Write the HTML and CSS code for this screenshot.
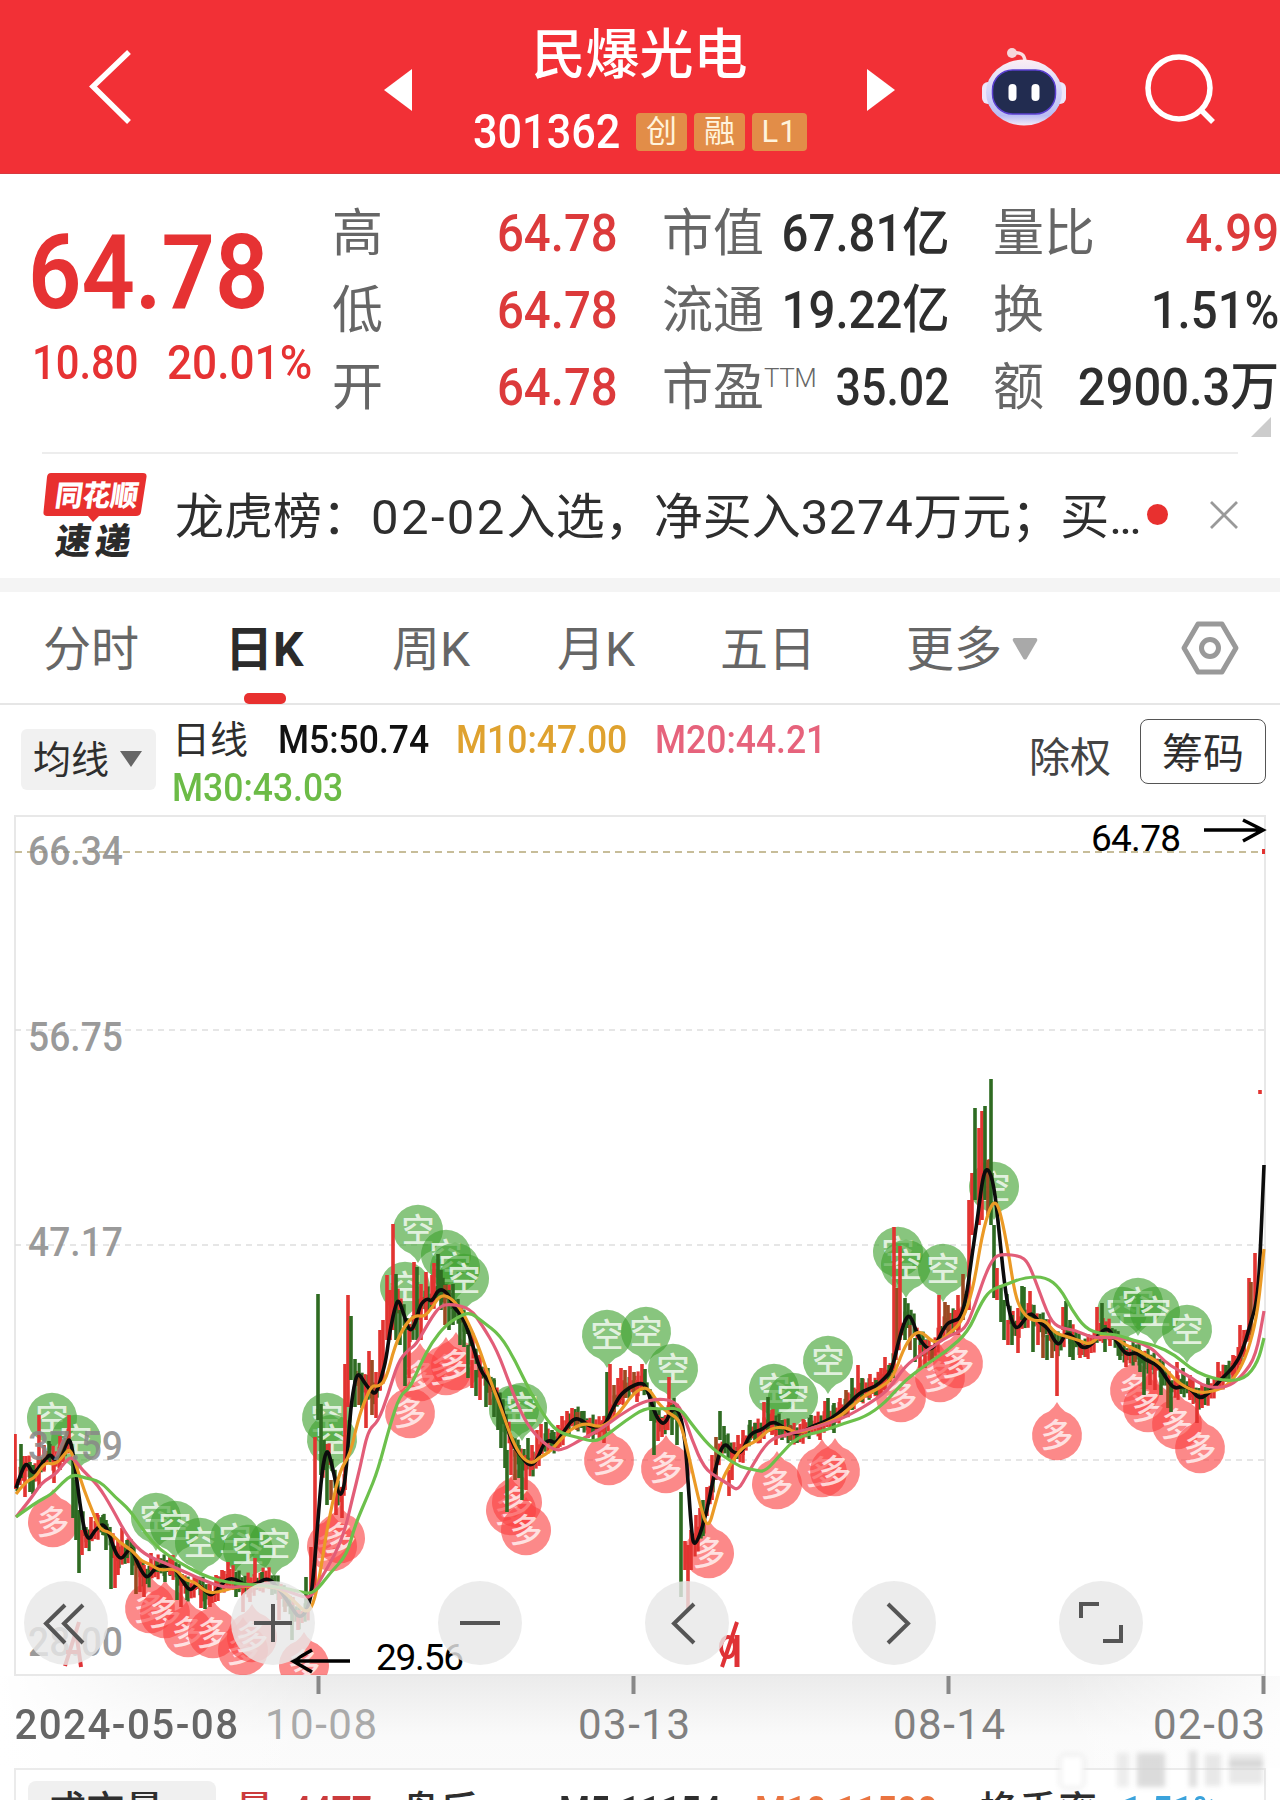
FILE: index.html
```html
<!DOCTYPE html>
<html lang="zh-CN">
<head>
    <meta charset="UTF-8">
    <meta name="viewport" content="width=device-width, initial-scale=1.0">
    <title>民爆光电 301362</title>
    <link rel="stylesheet" href="styles.css">
</head>
<body>
<header class="topbar">
    <svg class="back" viewBox="0 0 48 80"><path d="M43 5 L7 39.500 L43 75"/></svg>
    <svg class="tri" viewBox="0 0 28 42"><path d="M28 0 V42 L0 21 Z"/></svg>
    <div class="stock">
        <div class="stock-name">民爆光电</div>
        <div class="stock-code">
            <span class="code">301362</span>
            <span class="badge">创</span>
            <span class="badge">融</span>
            <span class="badge badge-l1">L1</span>
        </div>
    </div>
    <svg class="tri" viewBox="0 0 28 42"><path d="M0 0 V42 L28 21 Z"/></svg>
    <svg class="robot" viewBox="0 0 84 78">
        <defs>
            <linearGradient id="shell" x1="0" y1="0" x2="0" y2="1">
                <stop offset="0" stop-color="#fbeef4"/>
                <stop offset="0.5" stop-color="#d3d4f8"/>
                <stop offset="0.85" stop-color="#b9bcf3"/>
                <stop offset="1" stop-color="#f5e9f6"/>
            </linearGradient>
        </defs>
        <path d="M43 14 C43 6 38 4 31 5" fill="none" stroke="#fbdde0" stroke-width="3.500"/>
        <circle cx="30" cy="5" r="5" fill="#f6d6da"/>
        <rect x="0" y="34" width="14" height="22" rx="6" fill="#eee6fa"/>
        <rect x="70" y="34" width="14" height="22" rx="6" fill="#eee6fa"/>
        <ellipse cx="42" cy="44.500" rx="38" ry="33" fill="url(#shell)"/>
        <rect x="10.500" y="22" width="63" height="44" rx="20" fill="#222c50" stroke="#5a3fd0" stroke-width="1.500"/>
        <rect x="26.500" y="36" width="8" height="17" rx="4" fill="#fff"/>
        <rect x="49.500" y="36" width="8" height="17" rx="4" fill="#fff"/>
    </svg>
    <svg class="search" viewBox="0 0 72 72"><circle cx="34" cy="34" r="31"/><path d="M56 56 L68 68"/></svg>
</header>

<section class="quote">
    <div class="price">
        <div class="price-now"><span class="num">64.78</span></div>
        <div class="price-diff"><span class="num">10.80</span><span class="num">20.01%</span></div>
    </div>
    <dl class="stats stats-a">
        <div><dt>高</dt><dd class="up">64.78</dd></div>
        <div><dt>低</dt><dd class="up">64.78</dd></div>
        <div><dt>开</dt><dd class="up">64.78</dd></div>
    </dl>
    <dl class="stats stats-b">
        <div><dt>市值</dt><dd>67.81亿</dd></div>
        <div><dt>流通</dt><dd>19.22亿</dd></div>
        <div><dt>市盈<sup>TTM</sup></dt><dd class="pe">35.02</dd></div>
    </dl>
    <dl class="stats stats-c">
        <div><dt>量比</dt><dd class="up">4.99</dd></div>
        <div><dt>换</dt><dd>1.51%</dd></div>
        <div><dt>额</dt><dd class="amount">2900.3万</dd></div>
    </dl>
    <i class="corner"></i>
</section>

<section class="news">
    <svg class="news-logo" viewBox="0 0 108 92">
        <path d="M9 3 H101 Q105 3 104.500 7 L99 42 Q98.500 46 94 46 H57 L51 52 L46 46 H5 Q1 46 1.500 42 L5 7 Q5.500 3 9 3 Z" fill="#e8302f"/>
        <g transform="skewX(-8)">
            <text x="17" y="36" textLength="83" lengthAdjust="spacingAndGlyphs" font-size="29" fill="#fff">同花顺</text>
            <text x="24" y="84" textLength="35" lengthAdjust="spacingAndGlyphs" font-size="36" fill="#2b2b2b">速</text>
            <text x="64" y="84" textLength="35" lengthAdjust="spacingAndGlyphs" font-size="36" fill="#2b2b2b">递</text>
        </g>
    </svg>
    <p class="news-text">龙虎榜：<span>02-02</span>入选，净买入<span>3274</span>万元；买<b>...</b></p>
    <i class="news-dot"></i>
    <svg class="news-close" viewBox="0 0 28 28"><path d="M1 1 L27 27 M27 1 L1 27"/></svg>
</section>

<nav class="tabs">
    <a>分时</a>
    <a class="active">日K</a>
    <a>周K</a>
    <a>月K</a>
    <a>五日</a>
    <a class="more">更多<svg viewBox="0 0 26 22"><path d="M2 0 H24 Q26 1 25 3 L14.500 21 Q13 22 11.500 21 L1 3 Q0 1 2 0 Z"/></svg></a>
    <svg class="settings" viewBox="0 0 58 54"><path d="M17 3 H41 L55 27 L41 51 H17 L3 27 Z"/><circle cx="29" cy="27" r="8.500"/></svg>
</nav>

<section class="legend">
    <div class="ma-select">均线<svg viewBox="0 0 22 16"><path d="M0 0 H22 L11 16 Z"/></svg></div>
    <div class="ma-list">
        <span class="ma-title">日线</span>
        <span class="ma ma5">M5:50.74</span>
        <span class="ma ma10">M10:47.00</span>
        <span class="ma ma20">M20:44.21</span>
        <span class="ma ma30">M30:43.03</span>
    </div>
    <div class="adjust">除权</div>
    <div class="chips">筹码</div>
</section>

<section class="chart">
    <svg id="kline" viewBox="0 814 1280 862"></svg>
    <div class="chart-tools">
        <span><svg viewBox="0 0 84 84"><path d="M41 24 L22 42.500 L41 62 M59 24 L40 42.500 L59 62"/></svg></span>
        <span><svg viewBox="0 0 84 84"><path d="M42 23 V61 M23 42 H61"/></svg></span>
        <span><svg viewBox="0 0 84 84"><path d="M22 42 H62"/></svg></span>
        <span><svg viewBox="0 0 84 84"><path d="M49 23 L29 42.500 L49 62"/></svg></span>
        <span><svg viewBox="0 0 84 84"><path d="M36 23 L56 42.500 L36 62"/></svg></span>
        <span><svg viewBox="0 0 84 84"><path d="M22 37 V23 H40 M62 44 V60 H44"/></svg></span>
    </div>
</section>

<div class="dates">
    <span class="d0">2024-05-08</span>
    <span class="d1">10-08</span>
    <span class="d2">03-13</span>
    <span class="d3">08-14</span>
    <span class="d4">02-03</span>
    <svg class="ticks" viewBox="0 0 1280 18"><path d="M318.500 0 V18 M633.500 0 V18 M948.500 0 V18 M1263.500 0 V18"/></svg>
    <svg class="smudge" viewBox="0 0 214 40">
        <g fill="#d2d2d2">
            <rect x="5" y="6" width="24" height="33" rx="5" fill="#fff" stroke="#ccc"/>
            <rect x="62" y="4" width="12" height="34" opacity=".4"/>
            <rect x="82" y="4" width="28" height="34" opacity=".8"/>
            <rect x="134" y="2" width="8" height="36" opacity=".7"/>
            <rect x="150" y="5" width="16" height="32" opacity=".5"/>
            <rect x="174" y="5" width="34" height="30" opacity=".5"/>
            <rect x="174" y="12" width="34" height="5"/>
        </g>
    </svg>
</div>

<section class="volume">
    <div class="vol-select">成交量</div>
    <span class="v-red">量</span>
    <span class="v-red vn">4477</span>
    <span>盘后</span>
    <span class="vn v-m5">M5:11154</span>
    <span class="vn v-m10">M10:11500</span>
    <span>换手率</span>
    <span class="vn v-rate">1.51%</span>
</section>

<script src="chart.js"></script>
</body>
</html>
```
FILE: styles.css
```css
body {
    margin: 0;
    width: 1280px;
    height: 1800px;
    overflow: hidden;
    background: #fff;
    color: #2e2e2e;
    font-family: Roboto, "Noto Sans CJK SC", sans-serif;
}
.topbar {
    display: flex;
    height: 174px;
    background: #f23036;
    border-bottom: 1px solid #d8393f;
    box-sizing: border-box;
}
.topbar svg {
    flex: none;
    display: block;
}
.back {
    width: 48px;
    height: 80px;
    margin: 47px 0 0 86px;
    fill: none;
    stroke: #fff;
    stroke-width: 5.5;
}
.tri {
    width: 28px;
    height: 42px;
    margin-top: 69px;
    fill: #fff;
}
.back + .tri {
    margin-left: 250px;
}
.stock {
    width: 455px;
    text-align: center;
    color: #fff;
}
.stock-name {
    margin-top: 16px;
    font-size: 54px;
    line-height: 80px;
    font-weight: 500;
}
.stock-code {
    display: flex;
    align-items: center;
    height: 38px;
    margin: 17px 0 0 61px;
}
.code {
    width: 163px;
    font-size: 48px;
    font-weight: 500;
    line-height: 42px;
    text-align: left;
    transform: scaleX(0.9);
    transform-origin: left;
}
.badge {
    width: 51px;
    height: 38px;
    margin-right: 7px;
    border-radius: 4px;
    background: #e28d48;
    color: #fff3dc;
    font-size: 31px;
    line-height: 37px;
}
.badge-l1 {
    width: 55px;
    letter-spacing: 1px;
}
.robot {
    width: 84px;
    height: 78px;
    margin: 48px 0 0 87px;
}
.search {
    width: 72px;
    height: 72px;
    margin: 54px 0 0 79px;
    fill: none;
    stroke: #fff;
    stroke-width: 5.5;
}
.quote {
    display: flex;
    position: relative;
    height: 278px;
}
.num {
    display: inline-block;
    transform: scaleX(0.9);
    transform-origin: left;
}
.price {
    width: 332px;
    color: #e63233;
}
.price-now {
    margin: 39px 0 0 28px;
    font-size: 104px;
    font-weight: 600;
    line-height: 120px;
    height: 120px;
}
.price-diff {
    display: flex;
    margin: 2px 0 0 32px;
    font-size: 48px;
    font-weight: 500;
    line-height: 56px;
    white-space: nowrap;
}
.price-diff .num {
    transform: scaleX(0.92);
}
.price-diff .num:first-child {
    width: 135px;
    transform: scaleX(0.87);
}
.stats {
    margin: 21px 0 0;
}
.stats div {
    display: flex;
    justify-content: space-between;
    height: 77px;
    line-height: 77px;
    font-size: 51px;
    white-space: nowrap;
}
.stats-a { width: 286px; }
.stats-b { width: 288px; margin-left: 44px; }
.stats-c { width: 286px; margin-left: 43px; }
dt {
    width: 0;
    color: #666;
}
dt sup {
    font-size: 26px;
    line-height: 0;
    vertical-align: 18px;
    font-weight: 300;
    letter-spacing: -0.5px;
}
dd {
    margin: 0;
    font-size: 52px;
    font-weight: 500;
    transform: scaleX(0.91);
    transform-origin: right;
}
.pe {
    transform: scaleX(0.86);
}
.amount {
    transform: scaleX(0.94);
}
.up {
    color: #dc3a3b;
}
.corner {
    position: absolute;
    right: 9px;
    bottom: 15px;
    border-left: 20px solid transparent;
    border-bottom: 20px solid #ccc;
}
.news {
    display: flex;
    align-items: center;
    height: 126px;
    margin: 0 42px;
    border-top: 2px solid #ededed;
    box-sizing: border-box;
}
.news-logo {
    width: 108px;
    height: 92px;
    font-family: "Noto Sans CJK SC", sans-serif;
    font-weight: 900;
}
.news-text {
    width: 964px;
    margin: 0 0 8px 25px;
    font-size: 49px;
    white-space: nowrap;
}
.news-text span {
    letter-spacing: 0.6px;
}
.news-text span:first-child {
    letter-spacing: 2.4px;
}
.news-text b {
    font-weight: 400;
    letter-spacing: -3px;
}
.news-dot {
    width: 21px;
    height: 21px;
    margin: 0 0 4px 8px;
    border-radius: 50%;
    background: #e8302f;
}
.news-close {
    width: 28px;
    height: 28px;
    margin: 0 0 2px 42px;
    fill: none;
    stroke: #999;
    stroke-width: 2.8;
}
.tabs {
    display: grid;
    grid-template-columns: 182px 167px 165px 163px 186px 275px 58px;
    height: 127px;
    padding-left: 43px;
    border-top: 14px solid #f4f4f4;
    border-bottom: 2px solid #e6e6e6;
    box-sizing: border-box;
}
.tabs a {
    position: relative;
    height: 111px;
    line-height: 115px;
    font-size: 48px;
    color: #666;
}
.tabs .active {
    font-weight: 700;
    color: #2b2b2b;
}
.active::after {
    content: "";
    position: absolute;
    left: 19px;
    bottom: -1px;
    width: 42px;
    height: 11px;
    border-radius: 5px;
    background: #e8302f;
}
.more svg {
    width: 26px;
    height: 22px;
    margin-left: 10px;
    vertical-align: 6px;
    fill: #a9a9a9;
}
.settings {
    width: 58px;
    height: 54px;
    margin-top: 29px;
    fill: none;
    stroke: #999;
    stroke-width: 5;
    stroke-linejoin: round;
}
.legend {
    display: flex;
    height: 109px;
}
.ma-select {
    width: 123px;
    height: 61px;
    margin: 24px 0 0 21px;
    padding-left: 12px;
    border-radius: 6px;
    background: #f1f1f1;
    font-size: 38px;
    line-height: 63px;
}
.ma-select svg {
    width: 22px;
    height: 16px;
    margin-left: 11px;
    vertical-align: 6px;
    fill: #666;
}
.ma-list {
    display: grid;
    grid-template-columns: 106px 178px 199px 200px;
    grid-auto-rows: 48px;
    margin: 11px 0 0 16px;
    width: 839px;
    font-size: 38px;
    line-height: 49px;
    white-space: nowrap;
}
.ma {
    font-size: 39px;
    font-weight: 500;
    transform: scaleX(0.91);
    transform-origin: left;
}
.ma5 { color: #111; }
.ma10 { color: #dfa22f; }
.ma20 { color: #e6637c; }
.ma30 { color: #6cbb47; grid-column: 1 / 3; }
.adjust {
    width: 111px;
    margin-left: 18px;
    font-size: 41px;
    line-height: 106px;
    color: #444;
}
.chips {
    width: 124px;
    height: 63px;
    margin-top: 14px;
    border: 1.500px solid #555;
    border-radius: 8px;
    text-align: center;
    font-size: 41px;
    line-height: 68px;
}
.chart {
    position: relative;
    height: 862px;
}
#kline {
    display: block;
    width: 1280px;
    height: 862px;
}
.chart-tools {
    position: absolute;
    left: 24px;
    bottom: 11px;
    display: flex;
    gap: 123px;
}
.chart-tools span {
    width: 84px;
    height: 84px;
    border-radius: 50%;
    background: rgba(232, 232, 232, 0.82);
}
.chart-tools svg {
    display: block;
    fill: none;
    stroke: #555;
    stroke-width: 4;
}
.grid-label {
    font-size: 40px;
    font-weight: 500;
    fill: #888;
    fill-opacity: 0.85;
}
.price-label {
    font-size: 37px;
    fill: #000;
}
.arrow {
    fill: none;
    stroke: #000;
    stroke-width: 3.500;
}
.pin text {
    font-size: 33px;
    font-weight: 500;
    text-anchor: middle;
    fill: #fff;
    fill-opacity: 0.75;
}
.dates {
    position: relative;
    display: grid;
    grid-template-columns: 251px 242px 315px 315px 142px;
    height: 92px;
    background: linear-gradient(to right, #fff 0, rgba(255, 255, 255, 0) 320px, rgba(255, 255, 255, 0) 1060px, rgba(255, 255, 255, 0.800) 1280px), linear-gradient(#ebebeb, #fafafa 65%, #fbfbfb);
    font-size: 42px;
    color: #808080;
}
.dates span {
    padding-top: 24px;
    height: 50px;
    line-height: 50px;
    white-space: nowrap;
    transform-origin: left;
    letter-spacing: 1.5px;
}
.dates .d0 {
    padding-left: 15px;
    color: #666;
    font-weight: 500;
    transform: scaleX(0.96);
}
.dates .d1 { color: #aaa; padding-left: 14px; }
.dates .d2 { padding-left: 85px; }
.dates .d3 { padding-left: 85px; }
.dates .d4 { padding-left: 30px; }
.ticks {
    position: absolute;
    left: 0;
    top: 0;
    width: 1280px;
    height: 18px;
    stroke: #888;
    stroke-width: 4;
}
.smudge {
    position: absolute;
    left: 1055px;
    top: 73px;
    width: 214px;
    height: 40px;
    filter: blur(2.5px);
}
.volume {
    display: grid;
    grid-template-columns: 219px 56px 110px 158px 196px 225px 142px 100px;
    height: 70px;
    margin: 0 14px;
    border: 2px solid #ebebeb;
    font-size: 39px;
    font-weight: 500;
    line-height: 50px;
    white-space: nowrap;
}
.volume > span {
    padding-top: 16px;
}
.vol-select {
    width: 169px;
    height: 60px;
    margin: 11px 0 0 12px;
    padding-left: 19px;
    border-radius: 8px;
    background: #f0f0f0;
    line-height: 60px;
}
.vn {
    font-weight: 600;
    transform: scaleX(0.91);
    transform-origin: left;
}
.v-red { color: #cb3b3c; }
.v-m10 { color: #ea7440; }
.v-rate { color: #3ba3dc; }
```
FILE: chart.js
```js
// x, y pairs of each moving average
const ma5 = '16,1488 22,1470 27,1462 33,1475 40,1466 50,1453 54,1460 60,1457 66,1445 70,1437 75,1465 82,1520 88,1542 95,1530 103,1523 109,1533 115,1552 121,1560 127,1552 131,1547 136,1560 143,1574 148,1578 155,1568 163,1565 175,1568 182,1580 190,1592 197,1583 204,1590 212,1597 222,1583 232,1577 245,1585 255,1585 268,1577 280,1590 290,1605 300,1620 310,1605 314,1570 318,1520 322,1470 327,1447 332,1465 338,1493 342,1495 346,1475 350,1415 354,1385 358,1372 364,1382 370,1390 376,1395 382,1375 386,1360 390,1330 396,1303 399,1300 404,1315 410,1333 416,1322 420,1305 427,1298 432,1302 439,1288 448,1293 454,1308 460,1313 466,1325 473,1346 480,1370 490,1383 498,1395 504,1415 512,1443 520,1455 530,1467 537,1460 544,1443 550,1440 556,1444 566,1428 574,1418 582,1420 590,1427 600,1427 605,1425 612,1410 620,1395 630,1387 640,1383 646,1385 652,1405 658,1420 665,1425 672,1408 680,1411 685,1440 688,1480 691,1525 694,1550 705,1520 713,1480 720,1450 726,1443 733,1453 742,1453 750,1433 762,1430 772,1421 782,1426 792,1434 800,1433 815,1425 830,1420 845,1408 860,1392 875,1387 885,1378 892,1370 900,1335 907,1315 912,1318 919,1340 932,1353 945,1325 952,1321 960,1319 966,1300 972,1255 978,1215 983,1175 988,1167 994,1185 999,1230 1005,1290 1011,1320 1017,1330 1024,1320 1031,1312 1040,1323 1048,1328 1055,1342 1060,1345 1066,1332 1075,1338 1082,1349 1092,1345 1100,1332 1108,1328 1114,1337 1122,1350 1128,1355 1136,1352 1145,1360 1158,1365 1166,1378 1174,1389 1182,1386 1190,1388 1200,1400 1212,1390 1222,1378 1234,1367 1243,1350 1250,1325 1257,1302 1260,1260 1264,1165';
const ma10 = '16,1494 26,1481 35,1478 45,1462 55,1465 64,1455 70,1448 76,1465 84,1490 92,1510 100,1530 110,1532 120,1543 132,1550 141,1561 150,1564 160,1571 175,1568 185,1580 195,1582 207,1593 220,1592 235,1587 260,1586 280,1588 295,1602 306,1613 313,1606 320,1575 326,1535 332,1505 340,1470 350,1455 358,1420 365,1400 372,1385 378,1387 386,1380 395,1345 405,1325 415,1315 424,1317 432,1308 440,1295 450,1297 460,1308 468,1322 478,1345 490,1380 500,1405 512,1440 522,1458 532,1464 540,1457 550,1452 560,1440 572,1428 586,1423 598,1427 608,1424 620,1412 632,1395 643,1387 650,1390 658,1403 668,1413 678,1418 684,1435 692,1470 700,1505 708,1530 715,1505 722,1480 730,1465 742,1447 756,1442 770,1428 786,1427 797,1434 815,1427 835,1420 850,1408 865,1395 880,1388 893,1378 903,1350 912,1335 921,1331 930,1340 938,1343 950,1333 962,1322 973,1290 982,1235 990,1207 996,1201 1001,1215 1008,1250 1015,1295 1022,1312 1032,1321 1045,1320 1055,1333 1065,1336 1078,1340 1090,1345 1100,1335 1115,1337 1125,1345 1137,1350 1150,1357 1162,1365 1175,1380 1187,1388 1200,1393 1215,1391 1228,1385 1240,1370 1250,1345 1258,1310 1264,1249';
const ma20 = '16,1517 30,1500 42,1482 55,1475 65,1462 72,1456 82,1470 98,1485 112,1508 128,1538 145,1555 165,1563 185,1572 205,1581 225,1588 245,1586 262,1584 280,1588 300,1596 311,1598 320,1580 335,1555 345,1530 352,1500 360,1468 368,1430 378,1422 388,1395 398,1362 408,1350 416,1345 430,1320 440,1306 450,1304 470,1308 482,1325 497,1350 510,1385 524,1420 540,1440 555,1451 567,1448 580,1440 600,1430 620,1415 640,1403 655,1399 672,1400 682,1410 692,1440 704,1468 718,1478 730,1485 738,1491 748,1473 768,1440 785,1435 805,1430 830,1423 850,1415 875,1400 890,1388 905,1366 920,1355 935,1345 950,1335 965,1330 975,1305 985,1275 994,1257 1003,1254 1020,1256 1028,1262 1037,1285 1050,1320 1060,1328 1075,1330 1092,1338 1115,1337 1135,1341 1152,1348 1165,1362 1178,1370 1190,1377 1202,1385 1215,1388 1230,1386 1243,1375 1256,1356 1264,1311';
const ma30 = '16,1517 35,1503 52,1494 62,1483 73,1474 85,1478 100,1481 115,1497 130,1510 145,1533 160,1550 180,1563 200,1574 220,1581 240,1584 260,1585 285,1588 300,1592 314,1594 330,1573 347,1555 355,1525 368,1495 378,1470 390,1425 400,1395 410,1388 420,1365 432,1342 446,1325 458,1317 470,1312 483,1322 500,1335 515,1360 530,1392 548,1422 560,1433 580,1438 595,1442 607,1435 625,1421 645,1408 660,1409 680,1408 690,1422 710,1447 725,1457 740,1467 755,1470 765,1472 780,1455 797,1437 820,1432 845,1423 865,1417 885,1403 905,1380 930,1362 948,1350 968,1332 980,1305 990,1290 1005,1285 1025,1277 1046,1277 1060,1288 1072,1310 1085,1328 1100,1334 1115,1334 1135,1341 1155,1345 1175,1355 1190,1368 1205,1376 1225,1381 1245,1379 1258,1362 1264,1338';

// x, high, low, colour (r up, g down, m mixed)
const bars = '15,1434,1489,r 21,1444,1478,g 25,1462,1497,r 30,1462,1492,g 33,1465,1494,g 39,1415,1488,r 44,1445,1470,r 49,1441,1460,g 54,1455,1483,r 60,1436,1470,r 63,1440,1462,r 69,1415,1445,r 73,1460,1518,g 76,1480,1540,g 79,1510,1573,g 82,1530,1555,r 86,1530,1548,r 91,1517,1540,r 97,1513,1525,r 103,1515,1535,g 106,1520,1550,g 111,1535,1589,g 115,1555,1588,r 118,1540,1575,r 122,1528,1560,r 127,1540,1558,g 132,1545,1575,g 136,1560,1594,m 140,1560,1592,r 144,1565,1597,r 151,1553,1570,r 157,1560,1572,g 165,1562,1582,g 170,1555,1575,r 177,1570,1600,g 181,1578,1607,r 187,1580,1600,g 195,1578,1590,r 201,1585,1608,r 205,1588,1609,g 210,1585,1607,r 216,1575,1595,r 222,1570,1585,r 228,1562,1585,r 236,1582,1597,g 243,1585,1612,r 250,1580,1602,r 255,1558,1590,r 262,1572,1588,g 272,1578,1595,g 279,1590,1620,r 285,1595,1612,m 292,1605,1640,g 298,1610,1630,r 306,1577,1610,g 311,1547,1595,r 315,1437,1590,r 318,1294,1420,g 321,1404,1475,g 324,1440,1470,g 327,1450,1505,g 331,1480,1500,m 336,1490,1515,r 342,1495,1518,r 345,1364,1490,r 348,1295,1407,r 351,1316,1380,g 355,1359,1407,g 359,1375,1405,m 362,1380,1408,g 366,1390,1428,r 369,1351,1390,r 372,1360,1415,m 376,1372,1418,r 380,1330,1390,r 383,1320,1360,r 387,1275,1340,r 390,1290,1340,r 393,1224,1330,r 396,1274,1340,g 400,1310,1345,g 405,1325,1386,g 409,1330,1378,r 414,1262,1330,r 417,1267,1340,g 421,1284,1340,r 426,1272,1320,r 432,1275,1305,r 434,1263,1300,r 438,1254,1300,g 441,1270,1310,g 445,1285,1325,m 449,1290,1330,g 453,1284,1325,g 460,1315,1345,g 464,1320,1347,g 468,1345,1378,g 472,1360,1388,r 476,1370,1396,g 480,1355,1400,r 486,1375,1407,g 490,1380,1405,m 494,1380,1417,g 498,1395,1430,g 501,1405,1448,g 505,1420,1468,g 507,1450,1512,g 511,1440,1475,r 515,1450,1480,m 519,1445,1478,g 522,1455,1500,g 526,1455,1490,r 528,1438,1465,g 532,1445,1470,r 537,1430,1455,r 541,1424,1450,r 546,1422,1445,g 552,1430,1445,g 558,1425,1448,r 562,1416,1438,r 567,1411,1430,r 572,1408,1425,r 577,1412,1430,m 582,1411,1428,g 588,1420,1438,r 593,1425,1435,g 600,1422,1440,r 604,1416,1443,r 607,1372,1425,g 610,1364,1415,r 614,1385,1412,m 618,1378,1405,r 621,1368,1400,r 625,1370,1398,m 630,1366,1390,r 634,1372,1395,m 637,1380,1402,r 642,1364,1390,r 645,1369,1392,g 651,1395,1421,g 654,1400,1455,g 658,1415,1441,r 662,1418,1437,r 666,1415,1430,r 669,1377,1415,r 672,1405,1435,g 677,1410,1445,g 681,1492,1597,g 685,1541,1570,r 688,1545,1610,r 691,1530,1570,r 696,1515,1545,r 700,1508,1530,r 703,1500,1536,g 707,1487,1510,r 712,1455,1500,r 716,1437,1480,m 720,1411,1440,g 724,1426,1448,g 729,1470,1496,r 732,1450,1480,r 738,1435,1455,r 743,1430,1455,r 750,1420,1440,g 755,1423,1440,g 760,1428,1443,r 764,1402,1430,r 768,1397,1432,g 772,1410,1435,r 776,1430,1445,r 782,1420,1440,g 790,1425,1440,m 797,1430,1443,g 804,1420,1433,r 811,1415,1430,g 820,1422,1440,r 825,1401,1425,r 828,1398,1420,g 834,1403,1433,g 840,1398,1420,r 846,1390,1415,m 852,1378,1410,g 858,1365,1400,r 862,1378,1402,g 870,1374,1398,r 876,1380,1395,g 881,1368,1395,r 885,1357,1390,r 889,1365,1382,g 894,1227,1370,r 897,1288,1350,m 900,1246,1340,r 905,1298,1340,g 910,1325,1350,m 915,1338,1362,g 920,1345,1368,r 925,1340,1368,r 932,1345,1362,m 939,1295,1340,r 945,1302,1330,m 948,1305,1335,m 955,1310,1330,r 958,1295,1335,r 963,1274,1320,m 969,1200,1310,r 972,1173,1235,r 975,1108,1200,g 979,1128,1225,r 982,1111,1220,r 985,1106,1200,g 988,1160,1215,m 991,1079,1225,g 994,1225,1298,g 997,1268,1300,r 1001,1285,1322,g 1004,1300,1340,g 1008,1320,1345,r 1012,1315,1345,g 1018,1308,1353,r 1022,1286,1320,g 1024,1287,1310,g 1030,1291,1315,r 1033,1312,1352,g 1038,1320,1345,r 1043,1325,1358,m 1047,1335,1360,g 1052,1335,1358,m 1057,1345,1396,r 1063,1307,1330,r 1066,1301,1330,g 1070,1320,1357,g 1073,1335,1360,g 1080,1340,1358,r 1086,1345,1357,r 1097,1307,1335,r 1102,1303,1330,g 1105,1325,1352,g 1110,1330,1346,r 1120,1342,1360,g 1126,1350,1367,r 1135,1350,1362,m 1140,1350,1372,g 1144,1355,1395,g 1150,1360,1385,r 1155,1365,1390,r 1161,1370,1395,g 1168,1380,1408,m 1171,1385,1412,g 1177,1362,1388,r 1183,1368,1390,g 1190,1375,1400,r 1197,1395,1423,r 1202,1385,1408,r 1208,1378,1395,g 1218,1362,1385,r 1226,1365,1380,g 1233,1355,1378,r 1240,1325,1365,r 1244,1330,1352,r 1249,1278,1340,r 1251,1282,1335,m 1255,1253,1310,r 1260,1090,1094,r';

const shorts = '52,1418 76,1440 156,1518 175,1526 200,1543 235,1539 248,1550 274,1544 327,1418 332,1440 405,1287 418,1230 446,1255 455,1268 464,1279 514,1410 522,1408 607,1335 646,1332 673,1369 774,1389 793,1398 828,1361 898,1252 906,1265 943,1269 994,1187 1122,1312 1138,1303 1155,1312 1187,1330';
const longs = '53,1522 150,1608 165,1613 188,1632 213,1633 243,1650 252,1637 304,1665 332,1546 340,1538 410,1413 420,1376 446,1370 456,1365 511,1510 517,1502 526,1530 609,1460 666,1468 709,1553 777,1484 822,1472 835,1471 901,1397 940,1377 958,1363 1057,1435 1135,1390 1148,1407 1177,1424 1200,1448';

const colors = { r: '#e23431', g: '#2f6b22', m: '#9b4a22' };

const parse = s => s.split(' ').map(p => p.split(','));

function pin([x, y], label, fill, tail) {
    return `<g class="pin"><path fill="${fill}" fill-opacity=".62" d="${tail}" transform="translate(${x} ${y})"/>
        <text x="${x}" y="${+y + 12}">${label}</text></g>`;
}

// smooth curve through the midpoints
function line(points, color, width) {
    const pts = parse(points).map(p => p.map(Number));
    let d = `M${pts[0]}`;
    for (let i = 1; i < pts.length - 1; i++) {
        const [x, y] = pts[i];
        const [nx, ny] = pts[i + 1];
        d += ` Q${x} ${y} ${(x + nx) / 2} ${(y + ny) / 2}`;
    }
    d += ` L${pts[pts.length - 1]}`;
    return `<path d="${d}" fill="none" stroke="${color}" stroke-width="${width}" stroke-linejoin="round"/>`;
}

// short bars that follow the 5 day average and close the gaps
function fillers() {
    const pts = parse(ma5).map(p => p.map(Number));
    let out = '';
    for (let i = 0, x = 17; x < 1250; x += 3, i++) {
        const n = pts.findIndex(p => p[0] > x);
        const [a, b] = [pts[n - 1], pts[n]];
        if (Math.abs((b[1] - a[1]) / (b[0] - a[0])) > 5) continue;
        const y = a[1] + (b[1] - a[1]) * (x - a[0]) / (b[0] - a[0]);
        const h = 6 + (i * 7 % 5) * 1.6;
        const c = b[1] > a[1] ? (i % 4 ? 'g' : 'r') : (i % 4 ? 'r' : 'g');
        out += `<rect x="${x - 1.5}" y="${y - h}" width="3.2" height="${h * 2}" fill="${colors[c]}"/>`;
    }
    return out;
}

const down = 'M-8 23.5 A25 25 0 1 1 8 23.5 Q3 27 0 33 Q-3 27 -8 23.5 Z';
const up = 'M-8 -23.5 A25 25 0 1 0 8 -23.5 Q3 -27 0 -33 Q-3 -27 -8 -23.5 Z';

let svg = '<clipPath id="area"><rect x="14" y="815" width="1252" height="860"/></clipPath>';
svg += '<rect x="15" y="816" width="1250" height="859" fill="none" stroke="#e8e8e8" stroke-width="2"/>';
svg += '<path d="M15 852 H1265" stroke="#b5a878" stroke-width="1.5" stroke-dasharray="7 5"/>';
[1030, 1245, 1460].forEach(y => {
    svg += `<path d="M15 ${y} H1265" stroke="#dedede" stroke-width="1.3" stroke-dasharray="6 5"/>`;
});
svg += '<g clip-path="url(#area)">';
parse(shorts).forEach(p => svg += pin(p, '空', '#3fa22f', down));
parse(longs).forEach(p => svg += pin(p, '多', '#fa4040', up));
svg += fillers();
parse(bars).forEach(([x, hi, lo, c]) => {
    svg += `<rect x="${x - 1.8}" y="${hi}" width="3.6" height="${lo - hi}" fill="${colors[c]}"/>`;
});
svg += line(ma5, '#0c0c0c', 3.6) + line(ma10, '#eb9a26', 3.2) + line(ma20, '#e25d78', 3.2) + line(ma30, '#6cc04c', 3.2);
svg += '</g>';
svg += '<rect x="1262" y="849" width="3" height="5" fill="#e23431"/>';

[['66.34', 865], ['56.75', 1051], ['47.17', 1256], ['37.59', 1460], ['28.00', 1656]].forEach(([t, y]) => {
    svg += `<text class="grid-label" x="28" y="${y}" textLength="95" lengthAdjust="spacingAndGlyphs">${t}</text>`;
});
svg += '<text class="price-label" x="1091" y="851" textLength="90">64.78</text>';
svg += '<path class="arrow" d="M1204 830 H1262 M1243 820 L1263 830 L1243 841"/>';
svg += '<text class="price-label" x="376" y="1670" textLength="88">29.56</text>';
svg += '<path class="arrow" d="M350 1661 H293 M312 1650 L293 1661 L312 1672"/>';
svg += '<g fill="none" stroke="#df3236" stroke-width="4"><path d="M737 1622 L722 1667"/><path d="M737 1635 V1667" stroke-width="5"/><ellipse cx="728" cy="1647" rx="7" ry="10"/>';
svg += '<path d="M79 1622 L65 1666 M77 1638 L81 1667 M66 1652 H79"/></g>';
document.getElementById('kline').innerHTML = svg;
```
